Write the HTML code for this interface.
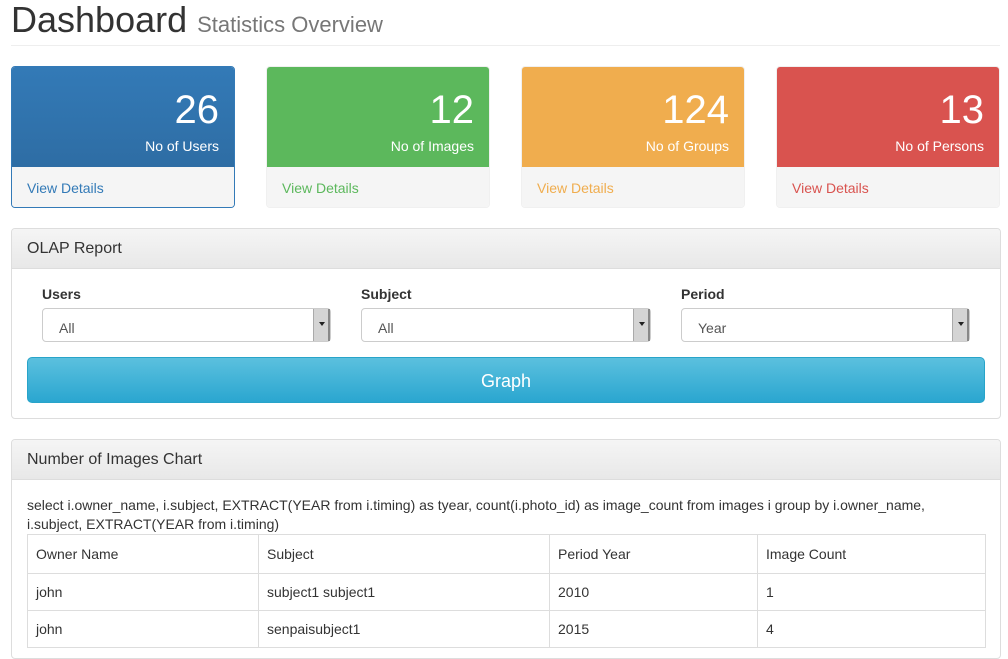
<!DOCTYPE html>
<html><head><style>
*{box-sizing:border-box}
body{margin:0;width:1008px;height:636px;overflow:hidden;background:#fff;font-family:"Liberation Sans",sans-serif;color:#333;font-size:14px;position:relative}
.abs{position:absolute}
h1{position:absolute;left:11px;top:-2px;margin:0;font-size:36px;font-weight:normal;line-height:44px}
h1 small{font-size:22px;color:#777}
.hr{position:absolute;left:11px;top:45px;width:989px;height:1px;background:#eee}
.card{position:absolute;top:66px;width:224px;height:142px;border-radius:4px;overflow:hidden;border:1px solid #ddd}
.card .top{height:100px;color:#fff;text-align:right;padding-right:15px}
.card .n{font-size:40px;line-height:40px;padding-top:23px}
.card .l{font-size:14px;margin-top:8px}
.card .f{height:41px;background:#f5f5f5;padding:13px 15px;font-size:14px}
.panel{position:absolute;left:11px;width:990px;border:1px solid #ddd;border-radius:4px;overflow:hidden}
.ph{height:40px;background:linear-gradient(#f5f5f5,#e8e8e8);border-bottom:1px solid #ddd;padding:11px 15px 0;font-size:16px}
.lab{position:absolute;top:286px;font-weight:bold;font-size:14px}
.sel{position:absolute;top:308px;height:34px;border:1px solid #ccc;border-radius:4px;padding:11px 16px 0;font-size:14px;color:#555;background:#fff}
.sel::after{content:"";position:absolute;right:0;top:0;width:14px;height:32px;background:#d4d4d4;border-left:1px solid #aaa;border-right:2px solid #888}
.sel::before{content:"";position:absolute;right:5px;top:13px;border:3px solid transparent;border-top:4px solid #222;z-index:2}
.btn{position:absolute;left:27px;top:357px;width:958px;height:46px;border-radius:5px;background:linear-gradient(#5bc0de,#2aa6d0);border:1px solid #28a4c9;color:#fff;font-size:18px;text-align:center;line-height:46px}
table{position:absolute;left:27px;top:534px;width:959px;border-collapse:collapse;font-size:14px}
td{border:1px solid #ddd;padding:0 8px;height:37px}
</style></head><body>
<h1>Dashboard <small>Statistics Overview</small></h1>
<div class="hr"></div>
<div class="card" style="left:11px;border-color:#337ab7"><div class="top" style="background:linear-gradient(#337ab7,#2e6da4)"><div class="n">26</div><div class="l">No of Users</div></div><div class="f" style="color:#337ab7">View Details</div></div>
<div class="card" style="left:266px;border-color:#f0f0f0"><div class="top" style="background:#5cb85c"><div class="n">12</div><div class="l">No of Images</div></div><div class="f" style="color:#5cb85c">View Details</div></div>
<div class="card" style="left:521px;border-color:#f0f0f0"><div class="top" style="background:#f0ad4e"><div class="n">124</div><div class="l">No of Groups</div></div><div class="f" style="color:#f0ad4e">View Details</div></div>
<div class="card" style="left:776px;border-color:#f0f0f0"><div class="top" style="background:#d9534f"><div class="n">13</div><div class="l">No of Persons</div></div><div class="f" style="color:#d9534f">View Details</div></div>
<div class="panel" style="top:228px;height:191px"><div class="ph">OLAP Report</div></div>
<div class="lab" style="left:42px">Users</div>
<div class="lab" style="left:361px">Subject</div>
<div class="lab" style="left:681px">Period</div>
<div class="sel" style="left:42px;width:289px">All</div>
<div class="sel" style="left:361px;width:290px">All</div>
<div class="sel" style="left:681px;width:289px">Year</div>
<div class="btn">Graph</div>
<div class="panel" style="top:439px;height:220px"><div class="ph">Number of Images Chart</div></div>
<div class="abs" style="left:27px;top:496px;width:945px;font-size:14px;line-height:19px">select i.owner_name, i.subject, EXTRACT(YEAR from i.timing) as tyear, count(i.photo_id) as image_count from images i group by i.owner_name, i.subject, EXTRACT(YEAR from i.timing)</div>
<table>
<tr><td style="width:231px;height:39px">Owner Name</td><td style="width:291px">Subject</td><td style="width:208px">Period Year</td><td>Image Count</td></tr>
<tr><td>john</td><td>subject1 subject1</td><td>2010</td><td>1</td></tr>
<tr><td>john</td><td>senpaisubject1</td><td>2015</td><td>4</td></tr>
</table>
</body></html>
